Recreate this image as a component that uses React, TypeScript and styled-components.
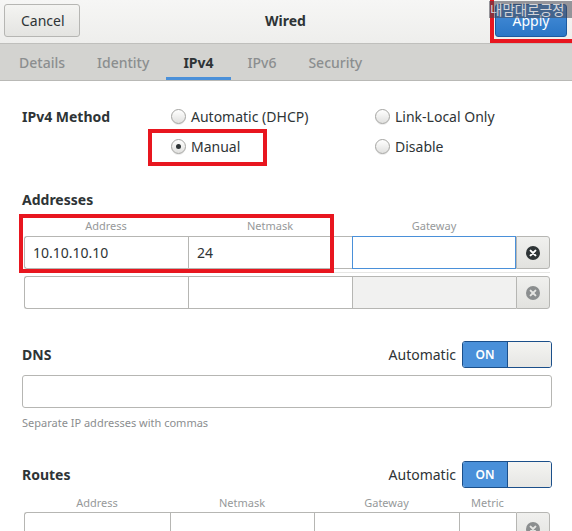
import React from "react";
import styled, { createGlobalStyle, css } from "styled-components";

const Global = createGlobalStyle`
  html, body { margin: 0; padding: 0; background: #ffffff; }
  body { font-family: "Noto Sans", "Open Sans", "Noto Sans CJK KR", sans-serif; color: #2e3436; }
  * { box-sizing: border-box; }
`;

const Root = styled.div`
  position: relative;
  width: 572px;
  height: 531px;
  overflow: hidden;
  background: #ffffff;
`;

const HeaderBar = styled.div`
  height: 44px;
  display: grid;
  grid-template-columns: 1fr auto 1fr;
  align-items: center;
  padding: 0 5px 2px 4px;
  background: linear-gradient(#f6f6f5, #eeeeec);
  border-bottom: 1px solid #bfbfbc;
`;

const Button = styled.button<{ $primary?: boolean }>`
  height: 33px;
  padding: 0 16px;
  border-radius: 3px;
  font-family: inherit;
  font-size: 14px;
  cursor: default;
  ${(p) =>
    p.$primary
      ? css`
          color: #ffffff;
          border: 1px solid #1b5aa0;
          background: linear-gradient(#4a90d9, #2a76c6);
          width: 72px;
        `
      : css`
          color: #2e3436;
          border: 1px solid #b6b6b3;
          background: linear-gradient(#f4f4f2, #e4e4e1);
          width: 76px;
        `}
`;

const Title = styled.div`
  font-weight: 700;
  font-size: 14px;
`;

const Right = styled.div`
  display: flex;
  justify-content: flex-end;
`;

const TabBar = styled.div`
  height: 37px;
  display: flex;
  align-items: stretch;
  padding-left: 4px;
  background: #d3d3d0;
  border-bottom: 1px solid #b9b9b6;
`;

const Tab = styled.div<{ $active?: boolean }>`
  display: flex;
  align-items: center;
  padding: 3px ${(p) => (p.$active ? "17px" : "15px")} 0;
  margin-right: 2px;
  font-size: 14px;
  color: ${(p) => (p.$active ? "#2e3436" : "#8b8e8f")};
  font-weight: ${(p) => (p.$active ? 700 : 500)};
  border-bottom: 3px solid ${(p) => (p.$active ? "#4a90d9" : "transparent")};
`;

const Content = styled.div`
  padding: 20px 20px 0 22px;
`;

const MethodGrid = styled.div`
  display: grid;
  grid-template-columns: 149px 204px 1fr;
  grid-auto-rows: 30px;
  align-items: center;
  font-size: 14px;
`;

const BoldLabel = styled.div`
  font-weight: 700;
  font-size: 14px;
  color: #2e3436;
`;

const RadioItem = styled.label`
  display: flex;
  align-items: center;
  gap: 5px;
  font-size: 14px;
  color: #2e3436;
`;

const RadioCircle = styled.span<{ $checked?: boolean }>`
  position: relative;
  width: 15px;
  height: 15px;
  border-radius: 50%;
  border: 1px solid #a4a4a1;
  background: linear-gradient(#ffffff, #e0e0de);
  box-shadow: 0 1px 0 rgba(0, 0, 0, 0.08);
  ${(p) =>
    p.$checked &&
    css`
      &::after {
        content: "";
        position: absolute;
        left: 4px;
        top: 4px;
        width: 5px;
        height: 5px;
        border-radius: 50%;
        background: #2e3436;
      }
    `}
`;

const SectionTitle = styled(BoldLabel)`
  margin-top: 29px;
  height: 20px;
  line-height: 20px;
`;

const TableWrap = styled.div`
  padding: 0 2px;
`;

const ColHeads = styled.div<{ $cols: string; $h?: number }>`
  display: grid;
  grid-template-columns: ${(p) => p.$cols};
  height: ${(p) => p.$h ?? 26}px;
  align-items: center;
  font-size: 11px;
  color: #96999a;
  text-align: center;
  padding-top: 4px;
`;

const EntryRow = styled.div<{ $cols: string }>`
  display: grid;
  grid-template-columns: ${(p) => p.$cols};
  height: 33px;
`;

const Cell = styled.div<{ $first?: boolean; $focus?: boolean; $disabled?: boolean }>`
  display: flex;
  align-items: center;
  padding: 0 8px;
  font-size: 14px;
  color: #2e3436;
  background: ${(p) => (p.$disabled ? "#f1f1f0" : "#ffffff")};
  border: 1px solid #b6b6b3;
  border-right: none;
  ${(p) => p.$first && css`border-radius: 3px 0 0 3px;`}
  ${(p) =>
    p.$focus &&
    css`
      border: 1px solid #4a90d9;
    `}
`;

const DelButton = styled.div`
  display: flex;
  align-items: center;
  justify-content: center;
  border: 1px solid #b6b6b3;
  border-radius: 0 3px 3px 0;
  background: linear-gradient(#f0f0ee, #e2e2df);
`;

const RowSep = styled.div`
  height: 7px;
  display: flex;
  align-items: center;
  &::before {
    content: "";
    flex: 1;
    height: 1px;
    background: #e6e6e4;
  }
`;

const SwitchRow = styled.div<{ $mt: number }>`
  display: flex;
  align-items: center;
  justify-content: space-between;
  height: 27px;
  margin-top: ${(p) => p.$mt}px;
`;

const SwitchGroup = styled.div`
  display: flex;
  align-items: center;
  gap: 6px;
  font-size: 14px;
  color: #2e3436;
`;

const Switch = styled.div`
  display: flex;
  width: 90px;
  height: 27px;
  border: 1px solid #1b4f8a;
  border-radius: 3px;
  overflow: hidden;
`;

const SwitchOn = styled.div`
  width: 44px;
  display: flex;
  align-items: center;
  justify-content: center;
  background: #4a90d9;
  color: #ffffff;
  font-size: 12px;
  font-weight: 600;
`;

const SwitchKnob = styled.div`
  flex: 1;
  background: linear-gradient(#f4f4f2, #e6e6e3);
  border-left: 1px solid #1b4f8a;
`;

const DnsEntry = styled.div`
  margin-top: 7px;
  height: 33px;
  border: 1px solid #b6b6b3;
  border-radius: 3px;
  background: #ffffff;
`;

const Hint = styled.div`
  margin-top: 7px;
  font-size: 11px;
  color: #8b8e8f;
`;

const Annotation = styled.div`
  position: absolute;
  border: 4px solid #e8161f;
  pointer-events: none;
`;

const Overlay = styled.div`
  position: absolute;
  left: 489px;
  top: 1px;
  width: 83px;
  height: 17px;
  background: rgba(70, 70, 80, 0.55);
  color: #d4d4d8;
  font-size: 13.5px;
  line-height: 16px;
  font-family: "Noto Sans CJK KR", sans-serif;
  white-space: nowrap;
  padding-left: 1px;
`;

const ClearIcon = ({ dim }: { dim?: boolean }) => (
  <svg width="14" height="14" viewBox="0 0 14 14">
    <circle cx="7" cy="7" r="7" fill={dim ? "#8b8e8f" : "#2e3436"} />
    <path d="M4.6 4.6 L9.4 9.4 M9.4 4.6 L4.6 9.4" stroke={dim ? "#e6e6e3" : "#ffffff"} strokeWidth="2" strokeLinecap="round" />
  </svg>
);

const addrCols = "164px 164px 164px 34px";
const routeCols = "146px 144px 145px 57px 34px";

export default function App() {
  return (
    <Root>
      <Global />
      <HeaderBar>
        <div>
          <Button>Cancel</Button>
        </div>
        <Title>Wired</Title>
        <Right>
          <Button $primary>Apply</Button>
        </Right>
      </HeaderBar>
      <TabBar>
        <Tab>Details</Tab>
        <Tab>Identity</Tab>
        <Tab $active>IPv4</Tab>
        <Tab>IPv6</Tab>
        <Tab>Security</Tab>
      </TabBar>
      <Content>
        <MethodGrid>
          <BoldLabel>IPv4 Method</BoldLabel>
          <RadioItem>
            <RadioCircle />
            Automatic (DHCP)
          </RadioItem>
          <RadioItem>
            <RadioCircle />
            Link-Local Only
          </RadioItem>
          <div />
          <RadioItem>
            <RadioCircle $checked />
            Manual
          </RadioItem>
          <RadioItem>
            <RadioCircle />
            Disable
          </RadioItem>
        </MethodGrid>

        <SectionTitle>Addresses</SectionTitle>
        <TableWrap>
          <ColHeads $cols={addrCols}>
            <span>Address</span>
            <span>Netmask</span>
            <span>Gateway</span>
            <span />
          </ColHeads>
          <EntryRow $cols={addrCols}>
            <Cell $first>10.10.10.10</Cell>
            <Cell>24</Cell>
            <Cell $focus />
            <DelButton>
              <ClearIcon />
            </DelButton>
          </EntryRow>
          <RowSep />
          <EntryRow $cols={addrCols}>
            <Cell $first />
            <Cell />
            <Cell $disabled />
            <DelButton>
              <ClearIcon dim />
            </DelButton>
          </EntryRow>
        </TableWrap>

        <SwitchRow $mt={32}>
          <BoldLabel>DNS</BoldLabel>
          <SwitchGroup>
            Automatic
            <Switch>
              <SwitchOn>ON</SwitchOn>
              <SwitchKnob />
            </Switch>
          </SwitchGroup>
        </SwitchRow>
        <DnsEntry />
        <Hint>Separate IP addresses with commas</Hint>

        <SwitchRow $mt={31}>
          <BoldLabel>Routes</BoldLabel>
          <SwitchGroup>
            Automatic
            <Switch>
              <SwitchOn>ON</SwitchOn>
              <SwitchKnob />
            </Switch>
          </SwitchGroup>
        </SwitchRow>
        <TableWrap>
          <ColHeads $cols={routeCols} $h={24}>
            <span>Address</span>
            <span>Netmask</span>
            <span>Gateway</span>
            <span>Metric</span>
            <span />
          </ColHeads>
          <EntryRow $cols={routeCols}>
            <Cell $first />
            <Cell />
            <Cell />
            <Cell />
            <DelButton>
              <ClearIcon dim />
            </DelButton>
          </EntryRow>
        </TableWrap>
      </Content>

      <Annotation style={{ left: 148, top: 129, width: 119, height: 37 }} />
      <Annotation style={{ left: 19, top: 214, width: 315, height: 59 }} />
      <Annotation style={{ left: 490, top: -4, width: 86, height: 47 }} />
      <Overlay>내맘대로긍정</Overlay>
    </Root>
  );
}
